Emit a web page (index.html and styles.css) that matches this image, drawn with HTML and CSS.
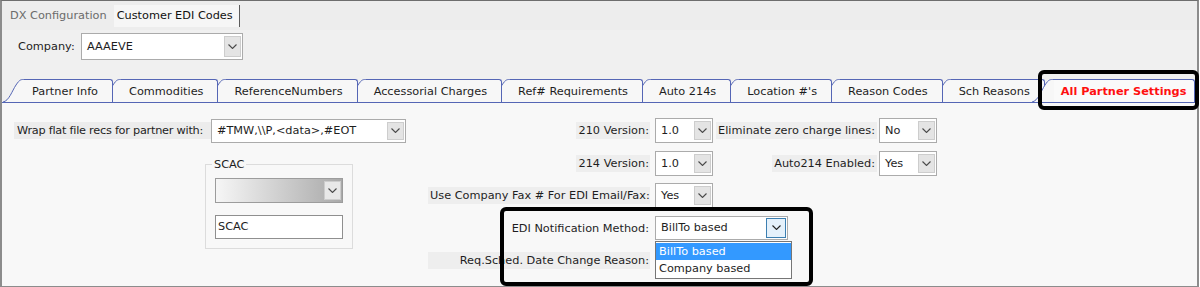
FILE: index.html
```html
<html>
  <head>
    <meta http-equiv="content-type" content="text/html; charset=utf-8" />
    <link rel="stylesheet" href="styles.css">
  </head>
  <body>
    <div class="window">
      <div class="doc-tabs">
        <span class="doc-tab">DX Configuration</span>
        <span class="doc-tab current">Customer EDI Codes</span>
      </div>

      <div class="company-row">
        <span class="company-lbl">Company:</span>
        <div class="combo company-combo">
          <span class="val">AAAEVE</span>
          <span class="drop"><svg width="9" height="5" viewBox="0 0 9 5"><polyline points="0.5,0.5 4.5,4.5 8.5,0.5"/></svg></span>
        </div>
      </div>

      <div class="tabstrip">
        <div class="tab"><svg class="slant" width="22" height="23" viewBox="0 0 22 23"><path class="fill" d="M0,23 C6,22 9,12 13,6 S18,0.5 22,0.5 L22,23 Z"/><path class="edge" d="M0,23 C6,22 9,12 13,6 S18,0.5 22,0.5"/></svg><span class="tab-face">Partner Info</span></div>
        <div class="tab"><svg class="slant" width="22" height="23" viewBox="0 0 22 23"><path class="fill" d="M0,23 C6,22 9,12 13,6 S18,0.5 22,0.5 L22,23 Z"/><path class="edge" d="M0,23 C6,22 9,12 13,6 S18,0.5 22,0.5"/></svg><span class="tab-face">Commodities</span></div>
        <div class="tab"><svg class="slant" width="22" height="23" viewBox="0 0 22 23"><path class="fill" d="M0,23 C6,22 9,12 13,6 S18,0.5 22,0.5 L22,23 Z"/><path class="edge" d="M0,23 C6,22 9,12 13,6 S18,0.5 22,0.5"/></svg><span class="tab-face">ReferenceNumbers</span></div>
        <div class="tab"><svg class="slant" width="22" height="23" viewBox="0 0 22 23"><path class="fill" d="M0,23 C6,22 9,12 13,6 S18,0.5 22,0.5 L22,23 Z"/><path class="edge" d="M0,23 C6,22 9,12 13,6 S18,0.5 22,0.5"/></svg><span class="tab-face">Accessorial Charges</span></div>
        <div class="tab"><svg class="slant" width="22" height="23" viewBox="0 0 22 23"><path class="fill" d="M0,23 C6,22 9,12 13,6 S18,0.5 22,0.5 L22,23 Z"/><path class="edge" d="M0,23 C6,22 9,12 13,6 S18,0.5 22,0.5"/></svg><span class="tab-face">Ref# Requirements</span></div>
        <div class="tab"><svg class="slant" width="22" height="23" viewBox="0 0 22 23"><path class="fill" d="M0,23 C6,22 9,12 13,6 S18,0.5 22,0.5 L22,23 Z"/><path class="edge" d="M0,23 C6,22 9,12 13,6 S18,0.5 22,0.5"/></svg><span class="tab-face">Auto 214s</span></div>
        <div class="tab"><svg class="slant" width="22" height="23" viewBox="0 0 22 23"><path class="fill" d="M0,23 C6,22 9,12 13,6 S18,0.5 22,0.5 L22,23 Z"/><path class="edge" d="M0,23 C6,22 9,12 13,6 S18,0.5 22,0.5"/></svg><span class="tab-face">Location #'s</span></div>
        <div class="tab"><svg class="slant" width="22" height="23" viewBox="0 0 22 23"><path class="fill" d="M0,23 C6,22 9,12 13,6 S18,0.5 22,0.5 L22,23 Z"/><path class="edge" d="M0,23 C6,22 9,12 13,6 S18,0.5 22,0.5"/></svg><span class="tab-face">Reason Codes</span></div>
        <div class="tab"><svg class="slant" width="22" height="23" viewBox="0 0 22 23"><path class="fill" d="M0,23 C6,22 9,12 13,6 S18,0.5 22,0.5 L22,23 Z"/><path class="edge" d="M0,23 C6,22 9,12 13,6 S18,0.5 22,0.5"/></svg><span class="tab-face">Sch Reasons</span></div>
        <div class="tab active"><svg class="slant" width="22" height="23" viewBox="0 0 22 23"><path class="fill" d="M0,23 C6,22 9,12 13,6 S18,0.5 22,0.5 L22,23 Z"/><path class="edge" d="M0,23 C6,22 9,12 13,6 S18,0.5 22,0.5"/></svg><span class="tab-face">All Partner Settings</span></div>
      </div>

      <div class="panel">
        <div class="form-grid">
          <!-- row 1 -->
          <div class="wrap-field">
            <span class="lbl wrap-lbl">Wrap flat file recs for partner with:</span>
            <div class="combo wrap-combo">
              <span class="val">#TMW,\\P,&lt;data&gt;,#EOT</span>
              <span class="drop"><svg width="9" height="5" viewBox="0 0 9 5"><polyline points="0.5,0.5 4.5,4.5 8.5,0.5"/></svg></span>
            </div>
          </div>
          <span class="lbl mid-lbl r1">210 Version:</span>
          <div class="combo small-combo c-mid r1">
            <span class="val">1.0</span>
            <span class="drop"><svg width="9" height="5" viewBox="0 0 9 5"><polyline points="0.5,0.5 4.5,4.5 8.5,0.5"/></svg></span>
          </div>
          <span class="lbl right-lbl r1">Eliminate zero charge lines:</span>
          <div class="combo small-combo c-right r1">
            <span class="val">No</span>
            <span class="drop"><svg width="9" height="5" viewBox="0 0 9 5"><polyline points="0.5,0.5 4.5,4.5 8.5,0.5"/></svg></span>
          </div>

          <!-- SCAC group -->
          <fieldset class="scac-group">
            <legend>SCAC</legend>
            <div class="combo scac-combo">
              <span class="val"></span>
              <span class="drop"><svg width="9" height="5" viewBox="0 0 9 5"><polyline points="0.5,0.5 4.5,4.5 8.5,0.5"/></svg></span>
            </div>
            <div class="textbox">SCAC</div>
          </fieldset>

          <!-- row 2 -->
          <span class="lbl mid-lbl r2">214 Version:</span>
          <div class="combo small-combo c-mid r2">
            <span class="val">1.0</span>
            <span class="drop"><svg width="9" height="5" viewBox="0 0 9 5"><polyline points="0.5,0.5 4.5,4.5 8.5,0.5"/></svg></span>
          </div>
          <span class="lbl right-lbl r2">Auto214 Enabled:</span>
          <div class="combo small-combo c-right r2">
            <span class="val">Yes</span>
            <span class="drop"><svg width="9" height="5" viewBox="0 0 9 5"><polyline points="0.5,0.5 4.5,4.5 8.5,0.5"/></svg></span>
          </div>

          <!-- row 3 -->
          <span class="lbl mid-lbl wide r3">Use Company Fax # For EDI Email/Fax:</span>
          <div class="combo small-combo c-mid r3">
            <span class="val">Yes</span>
            <span class="drop"><svg width="9" height="5" viewBox="0 0 9 5"><polyline points="0.5,0.5 4.5,4.5 8.5,0.5"/></svg></span>
          </div>

          <!-- row 4 -->
          <span class="lbl mid-lbl plain r4">EDI Notification Method:</span>
          <div class="combo edi-combo r4">
            <span class="val">BillTo based</span>
            <span class="drop hot"><svg width="9" height="5" viewBox="0 0 9 5"><polyline points="0.5,0.5 4.5,4.5 8.5,0.5"/></svg></span>
            <div class="droplist">
              <div class="item selected">BillTo based</div>
              <div class="item">Company based</div>
            </div>
          </div>

          <!-- row 5 -->
          <span class="lbl mid-lbl wide r5">Req.Sched. Date Change Reason:</span>
        </div>
      </div>

      <div class="callout callout-tab"></div>
      <div class="callout callout-edi"></div>
    </div>
  </body>
</html>
```

FILE: styles.css
```css
body {
  margin: 0;
  padding: 0;
  background: #fff;
  font-family: "DejaVu Sans", Tahoma, sans-serif;
  font-size: 11.3px;
  color: #1e1e1e;
}
.window {
  position: relative;
  width: 1199px;
  height: 287px;
  box-sizing: border-box;
  border-top: 1px solid #6e6e6e;
  border-left: 2px solid #8c8c8c;
  border-right: 2px solid #8c8c8c;
  border-bottom: 1px solid #8c8c8c;
  background: #f0f0f0;
  display: flex;
  flex-direction: column;
}

/* document tabs */
.doc-tabs {
  display: flex;
  height: 29px;
  padding-top: 4px;
  box-sizing: border-box;
  background: #ededed;
}
.doc-tab {
  height: 22px;
  line-height: 22px;
  padding: 0 3px;
}
.doc-tab:first-child {
  margin-left: 5px;
  color: #6b6b6b;
}
.doc-tab.current {
  margin-left: 4px;
  padding-right: 6px;
  background: #f6f6f6;
  color: #111;
  border-right: 1px solid #5c5c5c;
}

/* company row */
.company-row {
  display: flex;
  align-items: center;
  height: 27px;
  margin-top: 3px;
  padding-left: 16px;
}
.company-lbl {
  width: 63px;
}

/* combos */
.combo {
  display: flex;
  align-items: stretch;
  box-sizing: border-box;
  background: #fff;
  border: 1px solid #ababab;
}
.combo .val {
  flex: 1;
  display: flex;
  align-items: center;
  padding-left: 5px;
  white-space: nowrap;
  overflow: hidden;
}
.combo .drop {
  width: 17px;
  margin: 2px 1px 2px 0;
  box-sizing: border-box;
  background: #e4e4e4;
  border: 1px solid #cdcdcd;
  display: flex;
  align-items: center;
  justify-content: center;
}
.drop svg polyline {
  fill: none;
  stroke: #4a4a4a;
  stroke-width: 1.1;
}
.company-combo {
  width: 162px;
  height: 27px;
}

/* tab strip */
.tabstrip {
  display: flex;
  height: 24px;
  margin-top: 19px;
  padding-left: 1px;
  box-sizing: border-box;
  border-bottom: 1px solid #5566b5;
}
.tab {
  position: relative;
  display: flex;
  height: 23px;
  margin-left: -13px;
}
.tab:first-child { margin-left: 0; z-index: 10; }
.tab:nth-child(2) { z-index: 9; }
.tab:nth-child(3) { z-index: 8; }
.tab:nth-child(4) { z-index: 7; }
.tab:nth-child(5) { z-index: 6; }
.tab:nth-child(6) { z-index: 5; }
.tab:nth-child(7) { z-index: 4; }
.tab:nth-child(8) { z-index: 3; }
.tab:nth-child(9) { z-index: 2; }
.tab.active { z-index: 20; }
.slant .fill { fill: #f7f7f7; }
.slant .edge {
  fill: none;
  stroke: #5566b5;
  stroke-width: 1;
}
.tab-face {
  display: flex;
  align-items: center;
  padding: 1px 14px 0 7px;
  background: #f7f7f7;
  border-top: 1px solid #5566b5;
  border-right: 1px solid #5566b5;
  border-top-right-radius: 3px;
  white-space: nowrap;
}
.tab.active .tab-face {
  color: #ff1010;
  font-weight: bold;
  padding-right: 8px;
  background: #fafafa;
}

/* panel */
.panel {
  flex: 1;
  background: #f8f8f8;
  padding: 15px 0 0 12px;
}
.form-grid {
  display: grid;
  grid-template-columns: 414px 222px 65px 162px 60px;
  grid-template-rows: repeat(5, 25px);
  row-gap: 7.5px;
}
.lbl {
  align-self: center;
  height: 17px;
  line-height: 17px;
  white-space: nowrap;
}
.wrap-field {
  grid-column: 1;
  grid-row: 1;
  display: flex;
  align-items: center;
}
.wrap-lbl {
  width: 197px;
  box-sizing: border-box;
  padding-left: 3px;
  letter-spacing: -0.25px;
  background: #ececec;
}
.wrap-combo {
  width: 195px;
  height: 24px;
}
.mid-lbl {
  grid-column: 2;
  justify-self: end;
  padding: 0 1px 0 2px;
  background: #eeeeee;
}
.mid-lbl.wide {
  justify-self: stretch;
  text-align: right;
}
.mid-lbl.plain {
  background: none;
}
.right-lbl {
  grid-column: 4;
  justify-self: end;
  padding: 0 2px;
  background: #eeeeee;
}
.small-combo {
  width: 58px;
  height: 25px;
}
.c-mid { grid-column: 3; margin-left: 5px; }
.c-right { grid-column: 5; margin-left: 2px; }
.r1 { grid-row: 1; }
.r2 { grid-row: 2; }
.r3 { grid-row: 3; }
.r4 { grid-row: 4; }
.r5 { grid-row: 5; }

/* SCAC group box */
.scac-group {
  grid-column: 1;
  grid-row: 2 / span 4;
  align-self: start;
  margin: 8px 0 0 191px;
  width: 148px;
  box-sizing: border-box;
  min-width: 0;
  padding: 7px 9px 9px 9px;
  border: 1px solid #dcdcdc;
}
.scac-group legend {
  margin-left: -3px;
  padding: 0 2px;
  line-height: 12px;
}
.scac-combo {
  height: 25px;
  border-color: #9c9c9c;
  background: linear-gradient(to right, #f6f6f6, #a9a9a9);
}
.scac-combo .drop {
  background: #e8e8e8;
}
.textbox {
  margin-top: 12px;
  height: 24px;
  box-sizing: border-box;
  border: 1px solid #8f8f8f;
  background: #fff;
  padding-left: 2px;
  line-height: 22px;
}

/* EDI combo with open list */
.edi-combo {
  position: relative;
  grid-column: 3 / span 2;
  margin-left: 5px;
  width: 133px;
  height: 24px;
  align-self: start;
}
.edi-combo .drop.hot {
  width: 20px;
  margin: 1px 1px 1px 0;
  background: #e5f1fb;
  border: 1px solid #3c7fb1;
}
.edi-combo .drop.hot polyline {
  stroke: #222;
}
.droplist {
  position: absolute;
  top: 24px;
  left: -1px;
  width: 137px;
  box-sizing: border-box;
  border: 1px solid #767676;
  background: #fff;
  padding: 1px 0;
  z-index: 5;
}
.droplist .item {
  height: 17px;
  line-height: 17px;
  padding-left: 3px;
}
.droplist .item.selected {
  background: #3399ff;
  color: #fff;
}

/* annotation frames */
.callout {
  position: absolute;
  box-sizing: border-box;
  border: 4px solid #000;
  border-radius: 6px;
  z-index: 30;
}
.callout-tab {
  left: 1036px;
  top: 69px;
  width: 161px;
  height: 40px;
}
.callout-edi {
  left: 498px;
  top: 206px;
  width: 313px;
  height: 79px;
}
```
